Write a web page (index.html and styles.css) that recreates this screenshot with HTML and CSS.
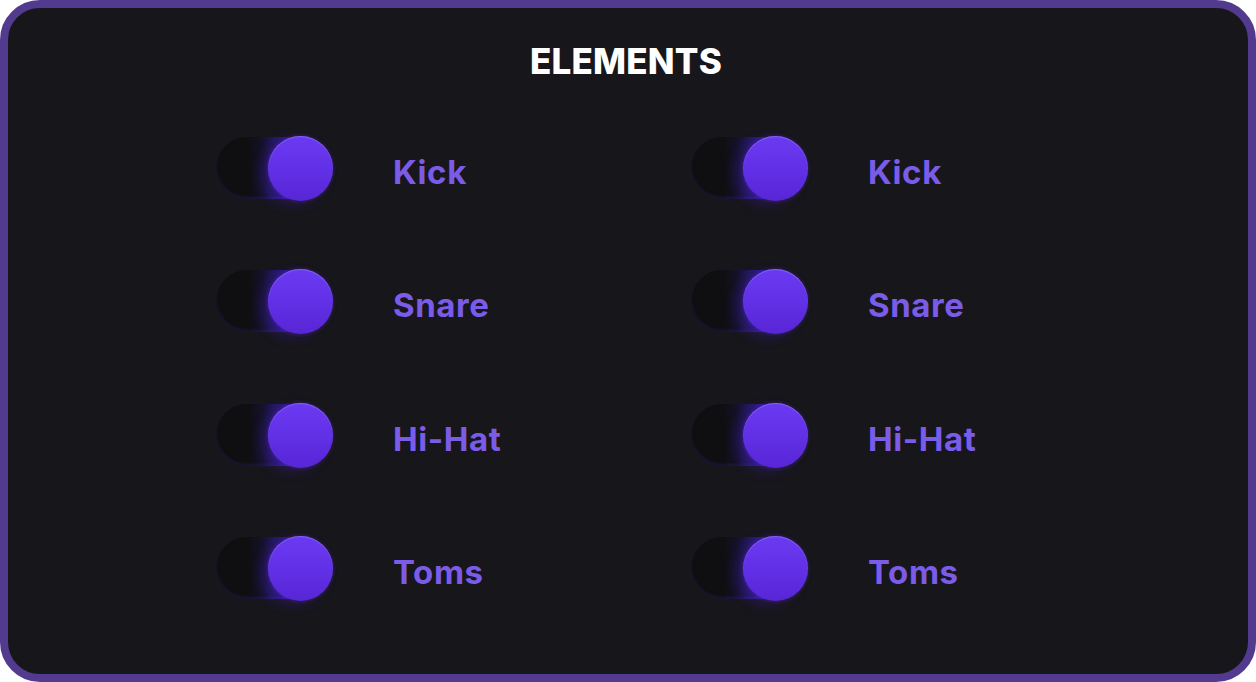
FILE: index.html
```html
<!DOCTYPE html>
<html>
<head>
<meta charset="utf-8">
<link rel="stylesheet" href="styles.css">
</head>
<body>
<div class="frame">
  <h1 class="title">ELEMENTS</h1>
  <div class="grid">
    <div class="item"><div class="toggle"><div class="track"></div><div class="knob"></div></div><span class="label">Kick</span></div>
    <div class="item"><div class="toggle"><div class="track"></div><div class="knob"></div></div><span class="label">Kick</span></div>
    <div class="item"><div class="toggle"><div class="track"></div><div class="knob"></div></div><span class="label">Snare</span></div>
    <div class="item"><div class="toggle"><div class="track"></div><div class="knob"></div></div><span class="label">Snare</span></div>
    <div class="item"><div class="toggle"><div class="track"></div><div class="knob"></div></div><span class="label">Hi-Hat</span></div>
    <div class="item"><div class="toggle"><div class="track"></div><div class="knob"></div></div><span class="label">Hi-Hat</span></div>
    <div class="item"><div class="toggle"><div class="track"></div><div class="knob"></div></div><span class="label">Toms</span></div>
    <div class="item"><div class="toggle"><div class="track"></div><div class="knob"></div></div><span class="label">Toms</span></div>
  </div>
</div>
</body>
</html>
```
FILE: styles.css
```css
html, body {
  margin: 0;
  padding: 0;
  background: #ffffff;
}
.frame {
  box-sizing: border-box;
  width: 1256px;
  height: 682px;
  border: 8px solid #523b8f;
  border-radius: 40px;
  background: #17161b;
  font-family: "Inter", "Liberation Sans", sans-serif;
  padding-top: 31px;
}
.title {
  margin: 0;
  text-align: center;
  color: #ffffff;
  font-size: 35px;
  font-weight: 800;
  line-height: 44px;
  letter-spacing: 0.2px;
  padding-right: 4px;
}
.grid {
  display: grid;
  grid-template-columns: 475px 475px;
  grid-auto-rows: 133.3px;
  padding-left: 208px;
  margin-top: 52px;
}
.item {
  display: flex;
  align-items: center;
  height: 66px;
}
.toggle {
  position: relative;
  width: 117px;
  height: 66px;
  flex: none;
}
.track {
  position: absolute;
  left: 0;
  top: 2px;
  width: 110px;
  height: 62px;
  border-radius: 31px;
  background: linear-gradient(90deg, #0f0f11 0%, #0f0f12 30%, #15122a 42%, #22185a 52%, #2d1a80 62%);
  box-shadow: inset 0 -2px 3px rgba(70, 40, 170, 0.25);
}
.knob {
  position: absolute;
  right: 0;
  top: 1px;
  width: 65px;
  height: 65px;
  border-radius: 50%;
  background: linear-gradient(180deg, #6a3af2 0%, #6230e6 50%, #5826d6 100%);
  box-shadow: inset 0 1px 1px rgba(170, 140, 255, 0.5), 0 0 4px rgba(100, 60, 240, 0.35), -8px 4px 12px rgba(70, 30, 190, 0.3);
}
.label {
  margin-left: 60px;
  color: #7b5ce8;
  font-size: 33px;
  font-weight: 700;
  letter-spacing: 0.6px;
  padding-top: 8px;
}
```
